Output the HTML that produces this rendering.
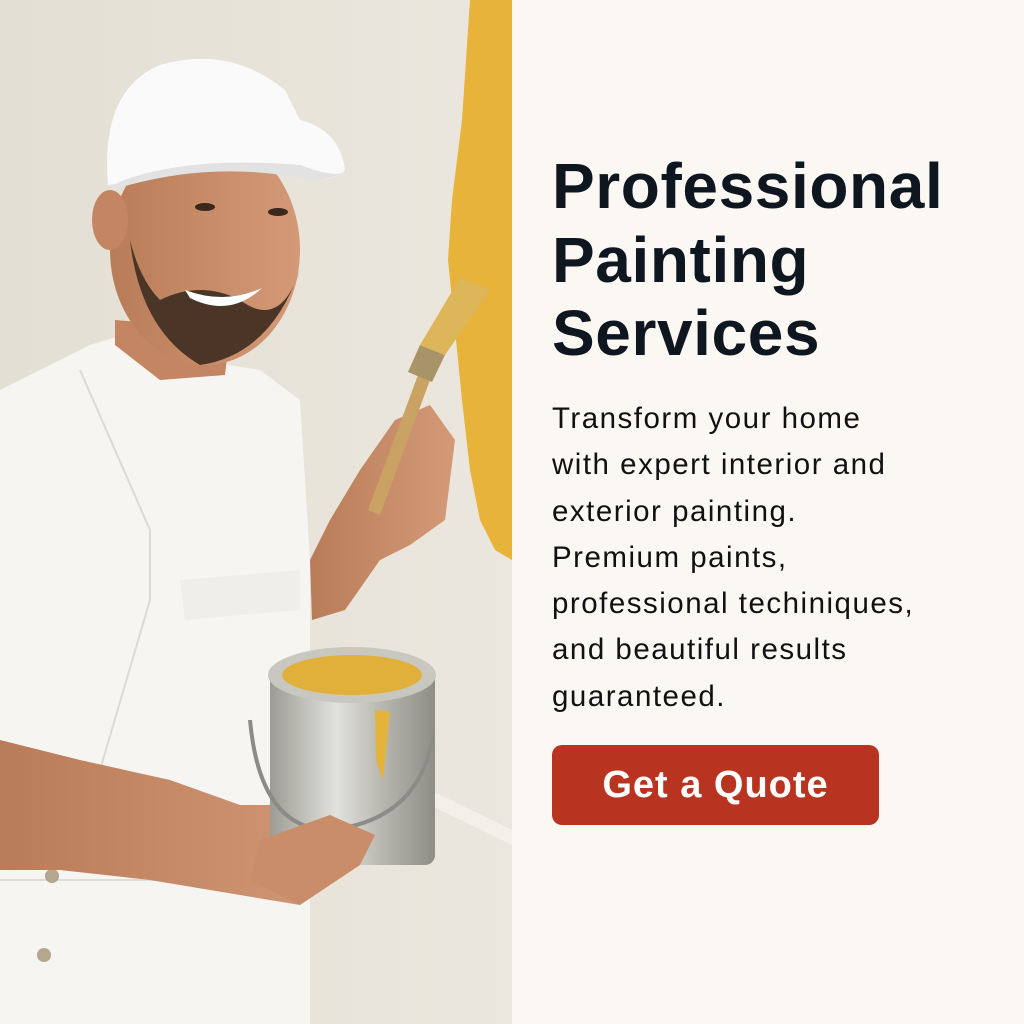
<!DOCTYPE html>
<html><head><meta charset="utf-8"><style>
html,body{margin:0;padding:0}
body{width:1024px;height:1024px;position:relative;overflow:hidden;background:#fbf8f4;font-family:"Liberation Sans",sans-serif}
#img{position:absolute;left:0;top:0;width:512px;height:1024px}
h1{position:absolute;left:552px;top:150px;margin:0;font-size:64px;line-height:73.5px;font-weight:700;color:#0e1620;letter-spacing:0.6px}
p{position:absolute;left:552px;top:396px;margin:0;font-size:29.5px;line-height:46.3px;color:#111;letter-spacing:1.5px;width:470px}
.btn{position:absolute;left:552px;top:745px;width:327px;height:80px;border-radius:10px;background:#b93420;color:#fff;font-weight:700;font-size:38px;line-height:80px;text-align:center;letter-spacing:1px}
</style></head><body>
<svg id="img" viewBox="0 0 512 1024" xmlns="http://www.w3.org/2000/svg">
<defs>
<linearGradient id="wall" x1="0" x2="1"><stop offset="0" stop-color="#e3dfd4"/><stop offset="1" stop-color="#ebe7de"/></linearGradient>
<linearGradient id="can" x1="0" x2="1"><stop offset="0" stop-color="#9c9c94"/><stop offset=".4" stop-color="#e2e2dc"/><stop offset=".7" stop-color="#b4b4ac"/><stop offset="1" stop-color="#8e8e86"/></linearGradient>
<linearGradient id="skin" x1="0" x2="1"><stop offset="0" stop-color="#b97c58"/><stop offset="1" stop-color="#d49a78"/></linearGradient>
</defs>
<rect width="512" height="1024" fill="url(#wall)"/>
<path d="M470 0 L512 0 L512 560 L495 550 L480 520 L470 470 L462 400 L455 330 L448 260 L452 200 L462 120 L466 60Z" fill="#e7b33a"/>
<path d="M430 790 L512 830 L512 845 L430 805Z" fill="#f3f0ea"/>
<path d="M0 390 L90 345 L140 330 L200 360 L260 370 L300 400 L310 560 L310 1024 L0 1024Z" fill="#f6f5f2"/>
<path d="M80 370 L150 530 L150 600 L100 770" stroke="#dcdad4" stroke-width="2" fill="none"/>
<path d="M180 580 L300 570 L300 610 L185 620Z" fill="#efeeea"/>
<path d="M0 880 L300 880" stroke="#dedcd6" stroke-width="2"/>
<circle cx="52" cy="876" r="7" fill="#b3a88e"/><circle cx="44" cy="955" r="7" fill="#b3a88e"/>
<path d="M115 320 L230 330 L225 375 L160 380 L115 345Z" fill="#c38562"/>
<ellipse cx="205" cy="250" rx="95" ry="115" fill="url(#skin)"/>
<ellipse cx="110" cy="220" rx="18" ry="30" fill="#c38562"/>
<path d="M130 240 Q140 330 200 365 Q270 355 300 270 Q280 330 240 300 Q200 280 160 300 Q140 280 130 240Z" fill="#4a3526"/>
<path d="M185 290 Q225 305 262 288 Q230 318 190 298Z" fill="#fff"/>
<ellipse cx="205" cy="207" rx="10" ry="4" fill="#3a281c"/><ellipse cx="278" cy="212" rx="10" ry="4" fill="#3a281c"/>
<path d="M108 185 Q100 90 160 65 Q230 45 285 90 L300 120 Q340 130 345 170 Q330 185 300 175 Q220 150 140 180Z" fill="#fafafa"/>
<path d="M112 185 Q180 155 300 165 Q335 178 345 172 Q320 185 290 176 Q200 162 112 190Z" fill="#e2e2e2"/>
<path d="M310 560 L330 520 L360 470 L395 420 L430 405 L455 440 L445 520 L410 545 L380 560 L345 610 L312 620Z" fill="url(#skin)"/>
<path d="M368 510 L380 515 L430 380 L418 375Z" fill="#c9a264"/>
<path d="M408 372 L432 382 L445 355 L420 345Z" fill="#a89468"/>
<path d="M420 345 L445 355 L490 290 L460 278Z" fill="#dcb658"/>
<path d="M0 740 L80 760 L170 780 L240 805 L320 805 L375 830 L360 860 L330 880 L300 905 L240 895 L150 880 L60 870 L0 870Z" fill="url(#skin)"/>
<rect x="270" y="665" width="165" height="200" rx="10" fill="url(#can)"/>
<ellipse cx="352" cy="675" rx="84" ry="28" fill="#c8c8c0"/>
<ellipse cx="352" cy="675" rx="70" ry="20" fill="#e1b03a"/>
<path d="M250 720 Q260 830 330 830 Q420 820 433 735" stroke="#8c8c86" stroke-width="4" fill="none"/>
<path d="M375 710 L390 712 L383 780 L376 760Z" fill="#e3b33c"/>
<path d="M260 840 L330 815 L375 835 L360 865 L300 905 L250 880Z" fill="#c98d6a"/>
</svg>
<h1>Professional<br>Painting<br>Services</h1>
<p>Transform your home<br>with expert interior and<br>exterior painting.<br>Premium paints,<br>professional techiniques,<br>and beautiful results<br>guaranteed.</p>
<div class="btn">Get a Quote</div>
</body></html>
